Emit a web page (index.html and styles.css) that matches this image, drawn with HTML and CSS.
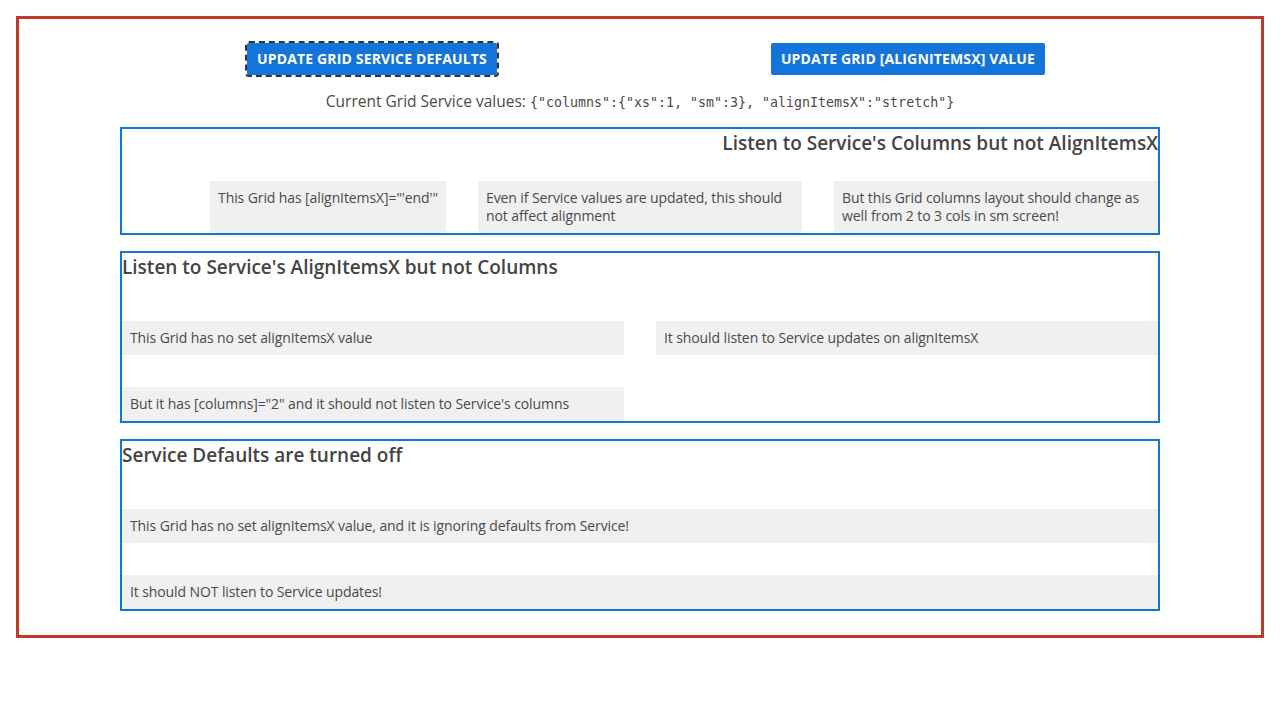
FILE: index.html
```html
<!DOCTYPE html>
<html lang="en">
<head>
<meta charset="utf-8">
<title>Grid Service</title>
<link rel="stylesheet" href="styles.css">
</head>
<body>
<div class="frame">
  <div class="content">
    <div class="actions">
      <button class="btn is-focused">Update Grid Service defaults</button>
      <button class="btn">Update Grid [alignItemsX] value</button>
    </div>
    <p class="values">Current Grid Service values: <code>{"columns":{"xs":1, "sm":3}, "alignItemsX":"stretch"}</code></p>

    <section class="demo demo-first">
      <h2 class="demo-title align-right">Listen to Service's Columns but not AlignItemsX</h2>
      <div class="grid cols-3 items-end">
        <div class="cell">This Grid has [alignItemsX]="'end'"</div>
        <div class="cell">Even if Service values are updated, this should not affect alignment</div>
        <div class="cell">But this Grid columns layout should change as well from 2 to 3 cols in sm screen!</div>
      </div>
    </section>

    <section class="demo">
      <h2 class="demo-title">Listen to Service's AlignItemsX but not Columns</h2>
      <div class="grid cols-2">
        <div class="cell">This Grid has no set alignItemsX value</div>
        <div class="cell">It should listen to Service updates on alignItemsX</div>
        <div class="cell">But it has [columns]="2" and it should not listen to Service's columns</div>
      </div>
    </section>

    <section class="demo">
      <h2 class="demo-title">Service Defaults are turned off</h2>
      <div class="grid cols-1">
        <div class="cell">This Grid has no set alignItemsX value, and it is ignoring defaults from Service!</div>
        <div class="cell">It should NOT listen to Service updates!</div>
      </div>
    </section>
  </div>
</div>
</body>
</html>
```

FILE: styles.css
```css
* { box-sizing: border-box; }

html, body {
  margin: 0;
  padding: 0;
  background: #ffffff;
}

body {
  padding: 16px;
  font-family: "Open Sans", "Noto Sans", sans-serif;
  color: #4a4a4a;
}

.frame {
  border: 3px solid #c0392b;
  padding: 24px 0 24px;
}

.content {
  width: 1040px;
  margin: 0 auto;
}

.actions {
  display: grid;
  grid-template-columns: 1fr 1fr;
  column-gap: 32px;
  justify-items: center;
}

.btn {
  font-family: "Open Sans", "Noto Sans", sans-serif;
  font-weight: 700;
  font-size: 14px;
  letter-spacing: 0.15px;
  text-transform: uppercase;
  color: #ffffff;
  background: #1474d9;
  border: 0;
  border-radius: 2px;
  padding: 0 10px;
  height: 32px;
  line-height: 32px;
  cursor: pointer;
}

.btn.is-focused {
  outline: 2px dashed #333333;
  outline-offset: 0;
}

.values {
  margin: 17px 0 0;
  height: 35px;
  line-height: 18px;
  text-align: center;
  font-size: 15.5px;
  color: #4a4a4a;
}

.values code {
  font-family: "DejaVu Sans Mono", monospace;
  font-size: 13.3px;
  color: #4a4a4a;
}

.demo {
  border: 2px solid #1474d9;
  margin-bottom: 16px;
}

.demo:last-child {
  margin-bottom: 0;
}

.demo-title {
  margin: 0 0 40px;
  font-size: 19px;
  font-weight: 600;
  line-height: 28px;
  color: #444444;
}

.demo-first .demo-title {
  margin-bottom: 24px;
}

.align-right {
  text-align: right;
}

.grid {
  display: grid;
  column-gap: 32px;
  row-gap: 32px;
}

.cols-1 { grid-template-columns: 1fr; }
.cols-2 { grid-template-columns: 1fr 1fr; }
.cols-3 { grid-template-columns: 1fr 1fr 1fr; }

.items-end { justify-items: end; }

.cell {
  background: #f0f0f0;
  padding: 8px;
  font-size: 14px;
  letter-spacing: -0.1px;
  line-height: 18px;
  color: #4a4a4a;
}
```
